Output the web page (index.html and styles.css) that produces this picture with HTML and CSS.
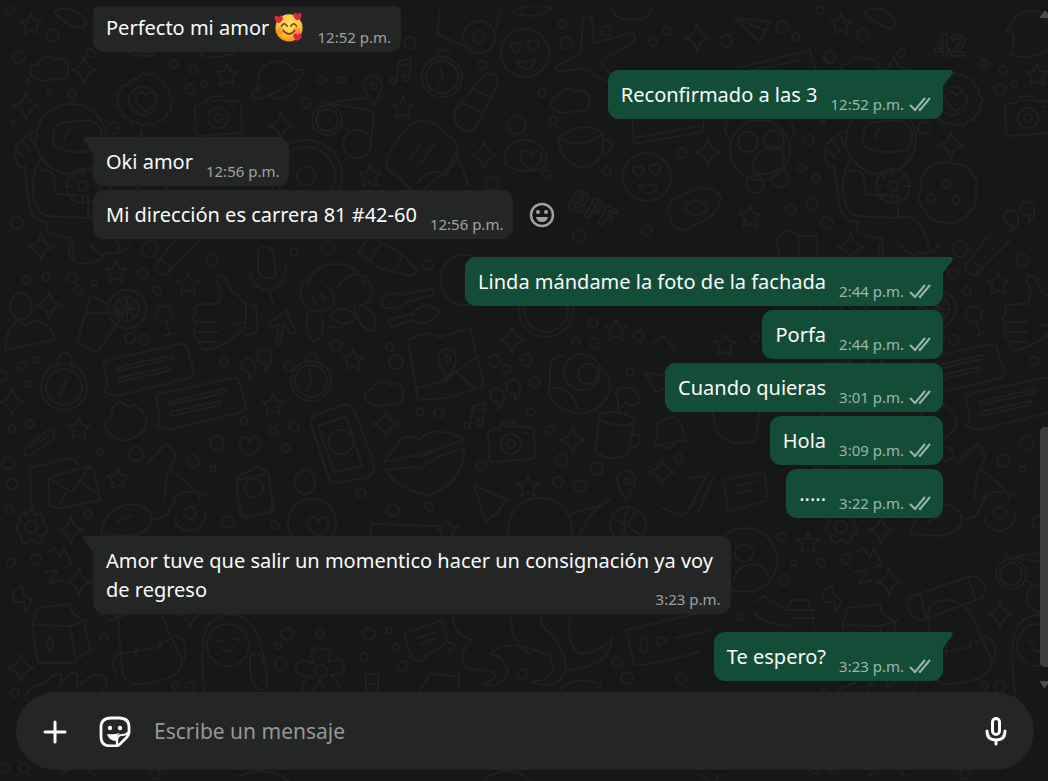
FILE: index.html
```
<!DOCTYPE html>
<html lang="es">
<head>
    <meta charset="UTF-8">
    <meta name="viewport" content="width=device-width, initial-scale=1.0">
    <title>Chat</title>
    <link rel="stylesheet" href="styles.css">
</head>
<body>
    <!-- wallpaper -->
    <svg class="wallpaper" aria-hidden="true">
        <defs>
            <path id="star" d="M0-11L3-4L11-3L5 2L7 10L0 6L-7 10L-5 2L-11-3L-3-4Z"/>
            <path id="spark" d="M0-14Q2-2 13 0Q2 2 0 14Q-2 2-13 0Q-2-2 0-14Z"/>
            <path id="cloud" d="M-16 10C-24 4-18-5-12-4C-10-12 2-13 5-8C14-13 20-4 18 2C20 10 10 12 4 11C-4 14-12 13-16 10Z"/>
            <path id="heart" d="M0 10C-16 0-11-11-4-9Q-1-8 0-4Q3-11 8-8C15-4 8 5 0 10Z"/>
            <g id="face">
                <circle r="24"/>
                <path d="M-8 0C-18-6-14-12-9-9C-4-14 0-6-8 0ZM8-2C0-8 2-14 7-12C13-16 18-8 8-2ZM-8 8Q2 10 10 6Q8 18 0 16Q-6 15-8 8Z"/>
            </g>
            <g id="camera">
                <path d="M-23-10Q-23-13-19-14L-12-15L-9-21L4-22L7-17L19-17Q23-16 23-12L24 11Q24 15 20 15L-18 18Q-22 18-22 14Z"/>
                <circle r="10"/><circle r="4"/>
                <path d="M-5-17L3-18M14-11h3"/>
            </g>
            <g id="watch">
                <circle r="20"/><circle r="16"/><path d="M-2-10L1 1L-5 9M-5-20Q-6-28 2-27Q8-26 6-20"/>
            </g>
            <g id="quotes">
                <path d="M-5 6A7 7 0 1 1 0-1Q1 9-7 13ZM12-3A7 7 0 1 1 16-8Q17 0 10 5Z"/>
            </g>
            <g id="pin">
                <path d="M0 16Q-14-4-6-11Q4-17 9-6Q10 3 0 16Z"/><circle cx="1" cy="-3" r="3"/>
            </g>
            <g id="note">
                <path d="M-5 9L-2-11L10-14L8 6M-2-6L9-9"/><circle cx="-8" cy="9" r="3"/><circle cx="5" cy="6" r="3"/>
            </g>
            <g id="goggles">
                <circle cx="-16" cy="-4" r="15"/><circle cx="-16" cy="-4" r="11"/><circle cx="14" cy="20" r="14"/><path d="M-4 4Q4 0 5 9M-22-22L26-14Q32-10 30-2L28 20M-10-22L22-26"/>
            </g>
            <g id="chatcard">
                <path d="M-42-8Q-44-12-38-14L34-30Q40-31 41-27L48-2Q48 3 44 4L-30 22L-42 18L-38 10Z"/>
                <path d="M-30-6L26-19Q30-18 26-15L-28-3ZM-28 4L22-7Q26-6 22-3L-26 8Z"/>
            </g>
            <g id="doodles">
                <use href="#star" x="31" y="24"/><use href="#star" x="227" y="75"/><use href="#star" x="403" y="108"/>
                <use href="#star" x="370" y="176"/><use href="#star" x="116" y="272"/><use href="#star" x="188" y="284"/>
                <use href="#star" x="353" y="360"/><use href="#star" x="273" y="405"/><use href="#star" x="79" y="429"/>
                <use href="#star" x="118" y="479"/><use href="#star" x="528" y="486"/><use href="#star" x="616" y="330"/>
                <use href="#star" x="725" y="345"/><use href="#star" x="750" y="217"/><use href="#star" x="808" y="543"/>
                <use href="#star" x="447" y="530"/>
                <use href="#spark" x="26" y="106"/><use href="#spark" x="84" y="70"/><use href="#spark" x="281" y="126"/>
                <use href="#spark" x="484" y="155"/><use href="#spark" x="697" y="38"/><use href="#spark" x="708" y="152"/>
                <use href="#spark" x="141" y="145"/><use href="#spark" x="41" y="247"/><use href="#spark" x="49" y="305"/>
                <use href="#spark" x="12" y="402"/><use href="#spark" x="512" y="340"/><use href="#spark" x="386" y="424"/>
                <use href="#spark" x="573" y="440"/><use href="#spark" x="662" y="472"/><use href="#spark" x="71" y="530"/>
                <use href="#spark" x="21" y="668"/><use href="#spark" x="190" y="614"/><use href="#spark" x="79" y="582"/>
                <use href="#cloud" x="50" y="68"/><use href="#cloud" x="571" y="100"/><use href="#cloud" x="385" y="393"/>
                <use href="#face" x="525" y="53"/><use href="#face" x="647" y="177"/>
                <use href="#camera" x="218" y="118"/><use href="#camera" x="511" y="444"/>
                <use href="#watch" x="442" y="77"/><use href="#watch" x="311" y="381"/>
                <use href="#quotes" x="255" y="366"/><use href="#quotes" x="504" y="396"/><use href="#quotes" x="208" y="218"/>
                <use href="#pin" x="373" y="89"/><use href="#pin" x="626" y="484"/>
                <use href="#note" x="401" y="72"/><use href="#note" x="475" y="417"/>
                <use href="#goggles" x="343" y="124"/><use href="#goggles" x="217" y="578"/>
                <use href="#chatcard" x="146" y="374"/><use href="#chatcard" x="198" y="408"/>
                <use href="#heart" x="250" y="446"/><use href="#heart" x="318" y="526"/><use href="#heart" x="531" y="160"/>
                <use href="#heart" x="146" y="101"/>

                <!-- badge, planet, plane -->
                <path d="M143 72q5 4 10 2q4 5 10 6q1 6 6 9q-1 6 4 11q-4 5-2 11q-6 3-7 9q-6-1-10 6q-6-4-11 0q-4-5-11-3q-2-6-9-7q0-6-6-10q3-5-1-11q6-3 6-9q7 0 10-7q6 1 11-5Z"/>
                <circle cx="143" cy="101" r="14"/>
                <path d="M260 90A19 19 0 0 1 295 72M270 96A19 19 0 0 0 298 80M262 87Q248 92 253 98Q262 102 300 78Q308 68 296 70"/>
                <path d="M581 52L583 18Q588 13 592 20L594 43L630 33Q638 35 634 42L600 62L616 80L611 84L583 68L558 72L554 68L576 56Z"/>
                <path d="M455 110L480 80Q486 72 494 74Q500 78 496 88L476 126Q472 134 464 130Q452 124 455 116ZM464 104L482 112M474 90L492 98"/>
                <path d="M734 18L770 22L760 42ZM734 18L764 30"/>
                <path d="M738 68L810 50L816 72M745 72L800 60"/>
                <path d="M440 12L437 34L464 46M500 10L496 28"/><circle cx="479" cy="37" r="16"/><circle cx="479" cy="37" r="6"/>
                <path d="M514 12Q530 2 552 8Q540 20 514 14ZM612 10Q618 24 645 18Q655 10 650 4"/>
                <path d="M54 12Q70 2 86 20Q86 30 78 28Q64 24 54 12ZM200 55Q210 30 196 32Q208 6 230 12Q250 30 236 52Q220 60 200 55Z"/>
                <text x="124" y="56" class="doodle-word">42</text>
                <text x="566" y="206" class="doodle-word" transform="rotate(28 566 206)">BFF</text>

                <!-- astronaut, cookie -->
                <circle cx="71" cy="139" r="35"/>
                <path d="M54 146Q50 122 66 122L88 120Q104 124 102 140L98 150Q70 156 54 146ZM64 140L69 128M34 132Q10 142 16 160Q20 172 26 166M30 136L36 148M22 140L30 152M17 150L26 158"/>
                <path d="M24 166L30 208Q34 222 48 222L46 230Q60 238 72 238L74 260M40 160Q30 176 34 200Q38 216 50 216L88 218V196L56 194L54 178Q50 166 40 172M88 218Q110 210 120 250Q100 262 90 244"/>
                <circle cx="83" cy="186" r="17"/><circle cx="83" cy="186" r="5"/>
                <path d="M83 169v6M83 197v6M66 186h6M94 186h6M71 174l4 4M95 174l-4 4M71 198l4-4"/>
                <path d="M124 164q12-4 20 0q16 0 18 10q8 8 3 18q4 14-6 20q-8 14-24 10q-14 2-20-12q-10-10-4-22q-2-16 13-24Z"/>
                <circle cx="137" cy="184" r="4"/><circle cx="121" cy="198" r="4"/><circle cx="146" cy="200" r="4"/>

                <!-- ring, book, houses and cups -->
                <circle cx="306" cy="176" r="36"/><circle cx="306" cy="176" r="29"/><circle cx="306" cy="176" r="9"/>
                <path d="M400 178L388 170Q384 160 396 142L410 124Q424 118 436 124L456 142L458 160L416 196ZM410 160L420 144M420 164L436 142M418 182Q430 166 446 176L456 152L469 186"/>
                <path d="M506 165Q502 148 516 141Q534 136 544 150Q550 162 542 168Q524 176 506 165Z"/>
                <path d="M558 138Q580 120 602 132Q608 160 586 168Q562 166 558 138ZM558 138Q582 150 602 134M604 140Q616 140 610 150Q606 156 602 152"/>
                <path d="M632 120L634 144L702 132L704 120M634 138L700 126"/>
                <path d="M670 215Q664 206 676 198L700 188Q718 188 721 198Q718 214 702 222L684 230Q672 230 670 215Z"/><ellipse cx="696" cy="208" rx="11" ry="7"/>
                <circle cx="760" cy="150" r="30"/><circle cx="748" cy="142" r="10"/><circle cx="774" cy="140" r="10"/>
                <path d="M752 164Q764 140 782 150Q790 172 766 174Q752 176 752 164ZM731 140Q720 130 729 122M790 140Q798 130 790 122"/>
                <circle cx="755" cy="184" r="9"/><circle cx="780" cy="178" r="9"/>
                <path d="M776 240L788 230L800 236L798 262M776 240L780 258M802 236L816 236L818 258"/>

                <!-- row at 250 - 340 -->
                <path d="M70 244Q64 260 84 264Q104 262 106 252Q124 256 130 244M155 266L178 236M164 276L200 240M155 266Q156 276 170 275M162 260L173 270"/>
                <path d="M218 304Q224 290 216 280Q218 272 226 278L232 292Q244 300 246 306V324Q236 342 208 350Q198 350 200 342Q190 334 196 326Q190 318 196 312Q192 304 206 304ZM196 322H217M196 332H218M202 342H218M246 304L256 306L257 332L246 336M232 326L244 322"/>
                <path d="M258 252Q258 246 266 247Q274 248 274 256L276 274Q274 280 266 278Q258 276 258 268ZM250 272Q254 290 268 290Q286 288 286 266M268 290L274 304"/>
                <path d="M308 284Q314 264 336 264Q358 264 364 284M328 326Q340 332 348 322"/>
                <path d="M304 282Q296 290 306 308Q320 316 334 306Q336 292 326 286M312 296L316 304M320 292L325 300M308 312Q304 334 314 342Q326 338 322 316M330 316Q344 300 356 318Q346 330 330 316ZM338 286Q350 270 366 276Q380 300 360 306M362 306Q380 312 374 330Q362 334 354 308"/>
                <path d="M268 325L286 310L296 333L290 334L284 322L280 345L276 344L279 324L270 328Z"/>
                <path d="M91 295L77 341L97 353L124 314ZM86 313L122 313M96 320l1 1M104 322l1 1M98 333l1 1"/>
                <circle cx="127" cy="309" r="19"/><circle cx="127" cy="309" r="12"/><path d="M127 297v24M115 309h24M119 301l16 16M135 301l-16 16"/>
                <ellipse cx="21" cy="306" rx="11" ry="13"/>
                <path d="M6 350Q4 330 18 321L27 326L34 320Q54 326 54 340Z"/>
                <circle cx="164" cy="314" r="8"/><path d="M166 322L170 334M164 336L175 333"/>
                <circle cx="64" cy="387" r="23"/><circle cx="64" cy="387" r="18"/><path d="M68 378L61 396L58 394L64 382ZM57 364Q58 352 66 353Q74 356 71 364"/>
                <path d="M105 428Q104 418 112 416Q110 406 120 402Q126 404 128 408Q134 402 138 408Q150 416 145 428Q136 442 120 440Q108 436 105 428Z"/>
                <path d="M24 450L45 432Q52 428 54 434Q56 438 50 442L32 454Q24 458 24 450ZM30 448L46 438"/>
                <path d="M358 252L370 236L402 254L418 272L410 276L380 268ZM368 262L382 242M402 256L396 272"/><circle cx="465" cy="280" r="25"/><circle cx="546" cy="310" r="27"/><circle cx="546" cy="310" r="22"/>
                <path d="M382 300Q390 290 400 295L430 289Q436 292 432 295L408 302Q394 312 382 306ZM388 320L412 314Q424 300 434 308Q442 310 436 316Q424 328 412 320L392 327Z"/>
                <path d="M408 340L426 333L440 337L470 328L484 386L448 398L418 400ZM418 388L440 382L479 356M444 382L456 372L474 388"/><use href="#pin" x="447" y="362"/>

                <!-- row at 350 - 500 -->
                <circle cx="582" cy="372" r="18"/><circle cx="588" cy="374" r="10"/>
                <path d="M564 356Q548 352 550 384Q546 396 556 404Q580 422 600 406Q620 388 600 366M552 388Q570 384 578 410M618 398Q612 388 624 388Q638 386 640 402L630 406Q626 398 618 412Z"/>
                <path d="M650 345L664 336L676 352M644 372L662 376L672 364L668 388L656 392Z"/>
                <path d="M668 418Q680 414 683 432L686 440L654 446Q658 436 656 428Q658 420 668 418ZM664 446Q670 452 674 444"/>
                <path d="M311 424Q310 417 318 414L342 405Q352 404 354 410L374 464Q376 474 366 478L336 483Q330 482 328 476ZM318 426L346 416L362 466L334 472Z"/><circle cx="341" cy="442" r="12"/>
                <path d="M384 462L402 438Q412 434 420 440Q430 424 464 438Q458 446 384 462ZM386 470Q410 466 420 468L440 456L464 448Q464 482 430 495Q400 492 386 470ZM410 456Q424 458 436 450"/>
                <path d="M600 414Q620 408 635 420L628 454Q608 464 595 450ZM600 420Q618 428 632 424M632 436Q640 430 640 442Q636 450 630 446"/>
                <path d="M32 510L30 468L70 458Q76 458 78 466M48 478L90 466Q94 468 100 500L62 508L50 506ZM48 478L72 492L90 466M60 504L66 492M84 484L98 494"/>
                <path d="M146 464L162 448L168 444L176 456L170 470Q196 486 200 500M168 470L164 500M172 500Q184 486 206 496"/>
                <path d="M236 478L258 466L268 472L274 508Q272 514 240 516ZM238 480L266 474"/><circle cx="254" cy="488" r="9"/>
                <ellipse cx="305" cy="482" rx="10" ry="12"/><path d="M474 485L508 500L486 522Z"/>
                <path d="M712 410Q730 390 760 404L756 440Q730 450 716 430ZM690 478L706 476M688 510L708 474M698 512L714 476M724 480L764 472L768 500L728 512ZM734 486L756 482M734 494L752 490"/>

                <!-- row at 500 - 600 -->
                <path d="M28 511l6 0l2 4l5-1l4 5l-2 5l5 3l-1 6l-5 2l0 6l-6 2l-4-4l-5 4l-6-3l0-6l-5-3l1-6l4-3l-2-5l5-4l4 1Z"/><circle cx="31" cy="527" r="6"/>
                <path d="M101 534Q104 510 128 504Q150 504 152 520Q150 532 130 536ZM117 522L132 516M152 520L166 516L176 498M176 516Q172 528 190 531Q206 528 206 510"/><circle cx="190" cy="513" r="6"/>
                <circle cx="312" cy="523" r="24"/>
                <path d="M240 505L244 518L272 512L272 498M368 550L372 524L440 526M478 500L486 520L498 514L506 500M569 515L600 505M580 534Q590 510 610 500M662 508L684 516L696 500"/>
                <circle cx="540" cy="530" r="32"/><circle cx="628" cy="525" r="18"/><path d="M612 516L642 536M618 540L636 510M628 507Q620 524 630 543"/>
                <circle cx="745" cy="560" r="32"/><circle cx="744" cy="553" r="9"/><path d="M734 580Q736 566 752 564Q768 566 768 576"/>
                <path d="M48 552L54 548L60 558L64 548L72 564L64 568M44 572L58 570L48 584L62 580M12 592L22 586L24 596L32 600L26 612L24 602L14 602Z"/>

                <!-- row at 600 - 690 -->
                <path d="M38 608L70 604L72 612L84 622L91 650L72 663L38 663L32 625ZM32 625L70 626L88 620M70 626L76 662M38 608L32 625M50 636Q44 648 50 650Q56 648 50 636Z"/>
                <path d="M118 616Q116 600 140 600Q160 604 168 630L182 660Q184 680 140 684Q124 686 122 668ZM120 654L156 648L172 638M136 646v10M160 640v8M120 652Q108 660 116 674M174 636Q190 640 184 660"/>
                <path d="M98 598L160 576Q170 576 174 584Q176 594 172 598L112 620Q98 620 98 598ZM110 594L116 618M158 578L166 600"/>
                <circle cx="228" cy="645" r="21"/><path d="M205 700Q200 650 204 636Q208 616 232 614Q256 618 262 650Q272 690 262 690Q248 686 250 656Q258 648 264 664M218 642q3-3 6 0M232 640q3-3 6 0M222 648Q228 656 234 646"/>
                <circle cx="321" cy="671" r="6"/><path d="M314 664Q306 646 322 648Q334 648 328 663Q344 654 344 666Q344 676 330 675Q346 690 334 694Q324 694 320 680Q310 700 302 690Q300 682 312 676Q294 676 296 666Q300 656 314 664Z"/>
                <path d="M26 700Q26 686 44 684Q56 670 62 676L58 690Q70 668 78 674L76 688Q100 666 106 680Q108 690 96 696"/>
                <path d="M404 634L442 620L448 642L426 656L422 662L412 658ZM418 638L436 632M420 644L436 638M444 642L456 644L448 652"/>
                <path d="M452 612Q452 636 474 640Q456 652 466 668L494 672Q498 680 482 684Q500 690 508 672Q504 656 490 654Q510 636 550 656Q560 680 532 682Q560 692 566 668Q564 644 546 630Q536 620 546 612M570 616Q566 650 582 654Q600 652 612 638Q610 668 566 670M512 612Q508 640 530 654"/>
                <path d="M626 630L704 612M626 630L634 664Q640 668 700 652M642 636L640 650L646 654L648 640ZM656 636L668 640L658 646ZM676 638L710 630"/>
                <path d="M364 674h14v26M366 674v26M366 684h12M420 690L430 674L456 676L460 672L458 688M560 690Q576 674 600 684V692"/>
                <path d="M754 602L764 596L786 610L792 600L808 600L812 612L814 628M754 612Q760 624 790 626M788 610h28M790 618h26"/>
                <path d="M60 775q20-16 34 0M240 776q30-12 50 6M484 780q20-16 40-4l10 8M700 775l12 8l8-8"/>

                <!-- bubbles between the drawings -->
                <circle cx="10" cy="10" r="4"/><circle cx="53" cy="35" r="6"/><circle cx="19" cy="57" r="6"/><circle cx="28" cy="81" r="2"/>
                <circle cx="72" cy="94" r="4"/><circle cx="49" cy="93" r="2"/><circle cx="91" cy="53" r="4"/><circle cx="13" cy="122" r="2"/>
                <circle cx="190" cy="89" r="5"/><circle cx="174" cy="64" r="4"/><circle cx="193" cy="70" r="4"/><circle cx="204" cy="84" r="3"/>
                <circle cx="114" cy="128" r="6"/><circle cx="306" cy="103" r="5"/><circle cx="321" cy="80" r="4"/><circle cx="410" cy="43" r="6"/>
                <circle cx="342" cy="80" r="3"/><circle cx="482" cy="65" r="4"/><circle cx="563" cy="24" r="4"/><circle cx="566" cy="43" r="6"/>
                <circle cx="606" cy="31" r="5"/><circle cx="667" cy="31" r="4"/><circle cx="653" cy="42" r="4"/><circle cx="726" cy="41" r="6"/>
                <circle cx="782" cy="27" r="6"/><circle cx="796" cy="37" r="4"/><circle cx="830" cy="57" r="5"/><circle cx="517" cy="125" r="9"/>
                <circle cx="542" cy="93" r="4"/><circle cx="553" cy="121" r="4"/><circle cx="492" cy="184" r="7"/><circle cx="546" cy="174" r="4"/>
                <circle cx="607" cy="171" r="4"/><circle cx="682" cy="153" r="5"/><circle cx="647" cy="231" r="5"/><circle cx="579" cy="236" r="6"/>
                <circle cx="809" cy="140" r="5"/><circle cx="801" cy="168" r="4"/><circle cx="791" cy="209" r="5"/><circle cx="812" cy="204" r="6"/>
                <circle cx="816" cy="178" r="4"/><circle cx="17" cy="223" r="6"/><circle cx="150" cy="249" r="8"/><circle cx="72" cy="278" r="5"/>
                <circle cx="46" cy="277" r="4"/><circle cx="27" cy="280" r="4"/><circle cx="94" cy="283" r="3"/><circle cx="143" cy="274" r="5"/>
                <circle cx="212" cy="260" r="6"/><circle cx="157" cy="291" r="4"/><circle cx="78" cy="290" r="4"/><circle cx="130" cy="338" r="5"/>
                <circle cx="144" cy="340" r="5"/><circle cx="328" cy="248" r="6"/><circle cx="294" cy="252" r="4"/><circle cx="336" cy="345" r="5"/>
                <circle cx="22" cy="366" r="4"/><circle cx="37" cy="360" r="3"/><circle cx="3" cy="376" r="5"/><circle cx="27" cy="384" r="3"/>
                <circle cx="30" cy="424" r="4"/><circle cx="12" cy="429" r="4"/><circle cx="224" cy="361" r="4"/><circle cx="289" cy="366" r="5"/>
                <circle cx="244" cy="421" r="4"/><circle cx="273" cy="431" r="4"/><circle cx="294" cy="427" r="5"/><circle cx="217" cy="443" r="7"/>
                <circle cx="136" cy="454" r="7"/><circle cx="193" cy="461" r="6"/><circle cx="213" cy="469" r="3"/><circle cx="100" cy="452" r="3"/>
                <circle cx="286" cy="448" r="4"/><circle cx="8" cy="463" r="6"/><circle cx="12" cy="484" r="5"/><circle cx="428" cy="265" r="5"/>
                <circle cx="396" cy="362" r="7"/><circle cx="390" cy="347" r="4"/><circle cx="494" cy="361" r="6"/><circle cx="526" cy="360" r="6"/>
                <circle cx="506" cy="369" r="4"/><circle cx="535" cy="382" r="5"/><circle cx="576" cy="341" r="4"/><circle cx="595" cy="343" r="5"/>
                <circle cx="593" cy="323" r="5"/><circle cx="639" cy="336" r="5"/><circle cx="630" cy="372" r="4"/><circle cx="439" cy="413" r="5"/>
                <circle cx="420" cy="412" r="4"/><circle cx="531" cy="412" r="4"/><circle cx="550" cy="430" r="4"/><circle cx="562" cy="460" r="6"/>
                <circle cx="597" cy="469" r="6"/><circle cx="580" cy="486" r="6"/><circle cx="558" cy="482" r="5"/><circle cx="481" cy="466" r="5"/>
                <circle cx="679" cy="458" r="4"/><circle cx="755" cy="338" r="4"/><circle cx="361" cy="493" r="5"/><circle cx="228" cy="522" r="6"/>
                <circle cx="88" cy="514" r="4"/><circle cx="275" cy="525" r="4"/><circle cx="393" cy="510" r="6"/><circle cx="429" cy="507" r="4"/>
                <circle cx="9" cy="510" r="4"/><circle cx="36" cy="559" r="5"/><circle cx="11" cy="563" r="4"/><circle cx="782" cy="537" r="4"/>
                <circle cx="784" cy="580" r="5"/><circle cx="794" cy="563" r="3"/><circle cx="104" cy="637" r="4"/><circle cx="287" cy="634" r="6"/>
                <circle cx="278" cy="646" r="3"/><circle cx="320" cy="633" r="4"/><circle cx="281" cy="664" r="6"/><circle cx="369" cy="634" r="6"/>
                <circle cx="389" cy="630" r="3"/><circle cx="396" cy="647" r="3"/><circle cx="364" cy="657" r="4"/><circle cx="403" cy="666" r="5"/>
                <circle cx="523" cy="674" r="5"/><circle cx="617" cy="662" r="5"/><circle cx="627" cy="678" r="6"/><circle cx="681" cy="679" r="5"/>
                <circle cx="190" cy="687" r="5"/><circle cx="175" cy="686" r="3"/><circle cx="15" cy="693" r="4"/><circle cx="741" cy="617" r="3"/>
                <circle cx="4" cy="768" r="5"/><circle cx="24" cy="768" r="5"/><circle cx="155" cy="774" r="5"/>
            </g>
        </defs>
        <use href="#doodles"/>
        <use href="#doodles" x="810"/>
    </svg>

    <!-- shared icons -->
    <svg class="sprite" aria-hidden="true">
        <symbol id="ticks" viewBox="0 0 24 16">
            <path d="M1 8L6 13L16 1M10 12L11 13L21 1" fill="none" stroke="currentColor" stroke-width="2"/>
        </symbol>
        <symbol id="tail" viewBox="0 0 14 18">
            <path d="M0 0H12Q15 1 13 4L4 16V18H0Z" fill="currentColor"/>
        </symbol>
    </svg>

    <main class="chat">
        <div class="messages">
            <div class="row">
                <div class="bubble">Perfecto mi amor <svg class="emoji" viewBox="0 0 32 32" role="img" aria-label="🥰">
                        <defs>
                            <radialGradient id="skin" cx="50%" cy="35%" r="65%">
                                <stop offset="0" stop-color="#ffe36b"/><stop offset=".6" stop-color="#fdc63c"/><stop offset="1" stop-color="#f08f1d"/>
                            </radialGradient>
                        </defs>
                        <circle cx="16" cy="17" r="14.500" fill="url(#skin)"/>
                        <circle cx="7" cy="20" r="4" fill="#f5703a" opacity=".45"/><circle cx="24" cy="20" r="4" fill="#f5703a" opacity=".45"/>
                        <path d="M8 15Q11 10 14 15M18 15Q21 10 24 15M10 20Q16 27 22 20" fill="none" stroke="#6b3a12" stroke-width="1.800" stroke-linecap="round"/>
                        <path id="love" d="M5 12C-1 9 0 3 3 4Q5 4 5 6Q7 2 9 5C11 8 8 10 5 12Z" fill="#e2263f"/>
                        <use href="#love" x="20" y="-3"/><use href="#love" x="20" y="19"/>
                    </svg><time class="time">12:52 p.m.</time></div>
            </div>
            <div class="row sent first">
                <div class="bubble">Reconfirmado a las 3<time class="time">12:52 p.m.<svg class="ticks"><use href="#ticks"/></svg></time><svg class="tail"><use href="#tail"/></svg></div>
            </div>
            <div class="row first">
                <div class="bubble">Oki amor<time class="time">12:56 p.m.</time><svg class="tail"><use href="#tail"/></svg></div>
            </div>
            <div class="row">
                <div class="bubble">Mi dirección es carrera 81 #42-60<time class="time">12:56 p.m.</time></div>
                <button class="react" type="button" aria-label="Reaccionar">
                    <svg viewBox="0 0 26 26" fill="none" stroke="currentColor">
                        <circle cx="13" cy="13" r="11" stroke-width="2.500"/>
                        <g fill="currentColor" stroke="none"><circle cx="9" cy="10" r="2"/><circle cx="17" cy="10" r="2"/><path d="M7 15H19Q18 20 13 20Q8 20 7 15Z"/></g>
                    </svg>
                </button>
            </div>
            <div class="row sent first">
                <div class="bubble">Linda mándame la foto de la fachada<time class="time">2:44 p.m.<svg class="ticks"><use href="#ticks"/></svg></time><svg class="tail"><use href="#tail"/></svg></div>
            </div>
            <div class="row sent">
                <div class="bubble">Porfa<time class="time">2:44 p.m.<svg class="ticks"><use href="#ticks"/></svg></time></div>
            </div>
            <div class="row sent">
                <div class="bubble">Cuando quieras<time class="time">3:01 p.m.<svg class="ticks"><use href="#ticks"/></svg></time></div>
            </div>
            <div class="row sent">
                <div class="bubble">Hola<time class="time">3:09 p.m.<svg class="ticks"><use href="#ticks"/></svg></time></div>
            </div>
            <div class="row sent">
                <div class="bubble">.....<time class="time">3:22 p.m.<svg class="ticks"><use href="#ticks"/></svg></time></div>
            </div>
            <div class="row first">
                <div class="bubble">Amor tuve que salir un momentico hacer un consignación ya voy de regreso<time class="time">3:23 p.m.</time><svg class="tail"><use href="#tail"/></svg></div>
            </div>
            <div class="row sent first">
                <div class="bubble">Te espero?<time class="time">3:23 p.m.<svg class="ticks"><use href="#ticks"/></svg></time><svg class="tail"><use href="#tail"/></svg></div>
            </div>
        </div>
        <div class="scrollbar" aria-hidden="true">
            <svg class="arrow" viewBox="0 0 8 7"><path d="M0 7V6L4 0H6L8 3V7Z"/></svg>
            <div class="track"><div class="thumb"></div></div>
            <svg class="arrow" viewBox="0 0 8 7"><path d="M0 0H8V3L5 7H4L0 1Z"/></svg>
        </div>
    </main>

    <form class="composer">
        <button type="button" aria-label="Adjuntar">
            <svg viewBox="0 0 32 32" fill="none" stroke="currentColor" stroke-width="3" stroke-linecap="round"><path d="M16 7V27M6 17H26"/></svg>
        </button>
        <button type="button" aria-label="Stickers">
            <svg viewBox="0 0 32 32" fill="none" stroke="currentColor" stroke-width="2.800" stroke-linejoin="round">
                <path d="M12 3H20Q30 3 30 12V17Q30 20 28 22L21 29Q19 31 16 31H12Q2 31 2 22V12Q2 3 12 3Z"/>
                <path d="M18 30V26Q18 20 23 20Q28 20 29 17" stroke-width="2.200"/>
                <g fill="currentColor" stroke="none"><circle cx="11" cy="13" r="2.200"/><circle cx="21" cy="13" r="2.200"/><path d="M8 19Q14 20 21 18Q18 20 17 26Q10 26 8 19Z"/></g>
            </svg>
        </button>
        <input class="message-input" type="text" aria-label="Escribe un mensaje" placeholder="Escribe un mensaje">
        <button type="button" aria-label="Mensaje de voz">
            <svg viewBox="0 0 32 32" fill="none" stroke="currentColor" stroke-width="3" stroke-linecap="round"><rect x="12.500" y="3.500" width="7" height="16" rx="3.500"/><path d="M7 16Q7 25 16 25Q25 25 25 16M16 25V29"/></svg>
        </button>
    </form>
</body>
</html>
```
FILE: styles.css
```
* {
    box-sizing: border-box;
}
body {
    margin: 0;
    padding-top: 6px;
    height: 100vh;
    display: flex;
    flex-direction: column;
    background-color: #161717;
    color: #fafafa;
    font-family: "Noto Sans", "Open Sans", sans-serif;
    font-size: 20px;
    overflow: hidden;
}
button {
    padding: 0;
    border: none;
    background: none;
    color: inherit;
    cursor: pointer;
}
svg {
    display: block;
}
.wallpaper {
    position: absolute;
    top: 0;
    left: 0;
    width: 100%;
    height: 100%;
    z-index: -1;
    clip-path: inset(6px 0 0 0);
    fill: none;
    stroke: #1f2020;
    stroke-width: 2px;
    stroke-linejoin: round;
    stroke-linecap: round;
}
.doodle-word {
    font-size: 28px;
    font-weight: bold;
}
.sprite {
    position: absolute;
    width: 0;
    height: 0;
}
.chat {
    flex: 1;
    min-height: 0;
    display: flex;
}
.messages {
    flex: 1;
    display: flex;
    flex-direction: column;
    justify-content: flex-end;
    gap: 4px;
    padding: 0 97px 11px 93px;
    overflow: hidden;
}
.row {
    display: flex;
    align-items: center;
    gap: 16px;
}
.row.first {
    margin-top: 14px;
}
.row.sent {
    justify-content: flex-end;
}
.bubble {
    position: relative;
    max-width: 75%;
    padding: 10px 10px 10px 13px;
    border-radius: 11px;
    background-color: #242626;
    line-height: 29px;
}
.sent .bubble {
    background-color: #144d37;
}
.row.first .bubble {
    border-top-left-radius: 0;
}
.row.sent.first .bubble {
    border-top-left-radius: 11px;
    border-top-right-radius: 0;
}
/* floats on the last line of the text, a little below it */
.time {
    float: right;
    display: flex;
    align-items: center;
    gap: 5px;
    margin: 10px 0 -10px 13px;
    color: #a0a1a1;
    font-size: 15px;
}
.sent .time {
    color: #9bb5ab;
}
.ticks {
    width: 24px;
    height: 16px;
}
.tail {
    position: absolute;
    top: 0;
    left: -10px;
    width: 14px;
    height: 18px;
    color: #242626;
    transform: scaleX(-1);
}
.sent .tail {
    left: auto;
    right: -10px;
    color: #144d37;
    transform: none;
}
.emoji {
    display: inline-block;
    width: 30px;
    height: 30px;
    margin: -8px 0 -2px;
    vertical-align: middle;
}
.react {
    color: #a0a1a1;
}
.react svg {
    width: 26px;
    height: 26px;
}
.scrollbar {
    width: 8px;
    padding: 5px 0 4px;
    display: flex;
    flex-direction: column;
}
.arrow {
    width: 8px;
    height: 7px;
    fill: #4a4b4b;
}
.track {
    flex: 1;
    display: flex;
    flex-direction: column;
    justify-content: flex-end;
    padding-bottom: 14px;
}
.thumb {
    height: 37%;
    border-radius: 5px 0 0 5px;
    background-color: #3c3d3d;
}
.composer {
    display: flex;
    align-items: center;
    margin: 0 14px 11px 16px;
    padding: 0 22px 0 23px;
    height: 78px;
    border-radius: 39px;
    background-color: #242626;
}
.composer button svg {
    width: 32px;
    height: 32px;
}
.composer button + button {
    margin-left: 28px;
}
.message-input {
    flex: 1;
    min-width: 0;
    margin-left: 23px;
    padding: 0;
    border: none;
    outline: none;
    background: none;
    color: #fafafa;
    font-family: inherit;
    font-size: 21px;
}
.message-input::placeholder {
    color: #969797;
    opacity: 1;
}
```
